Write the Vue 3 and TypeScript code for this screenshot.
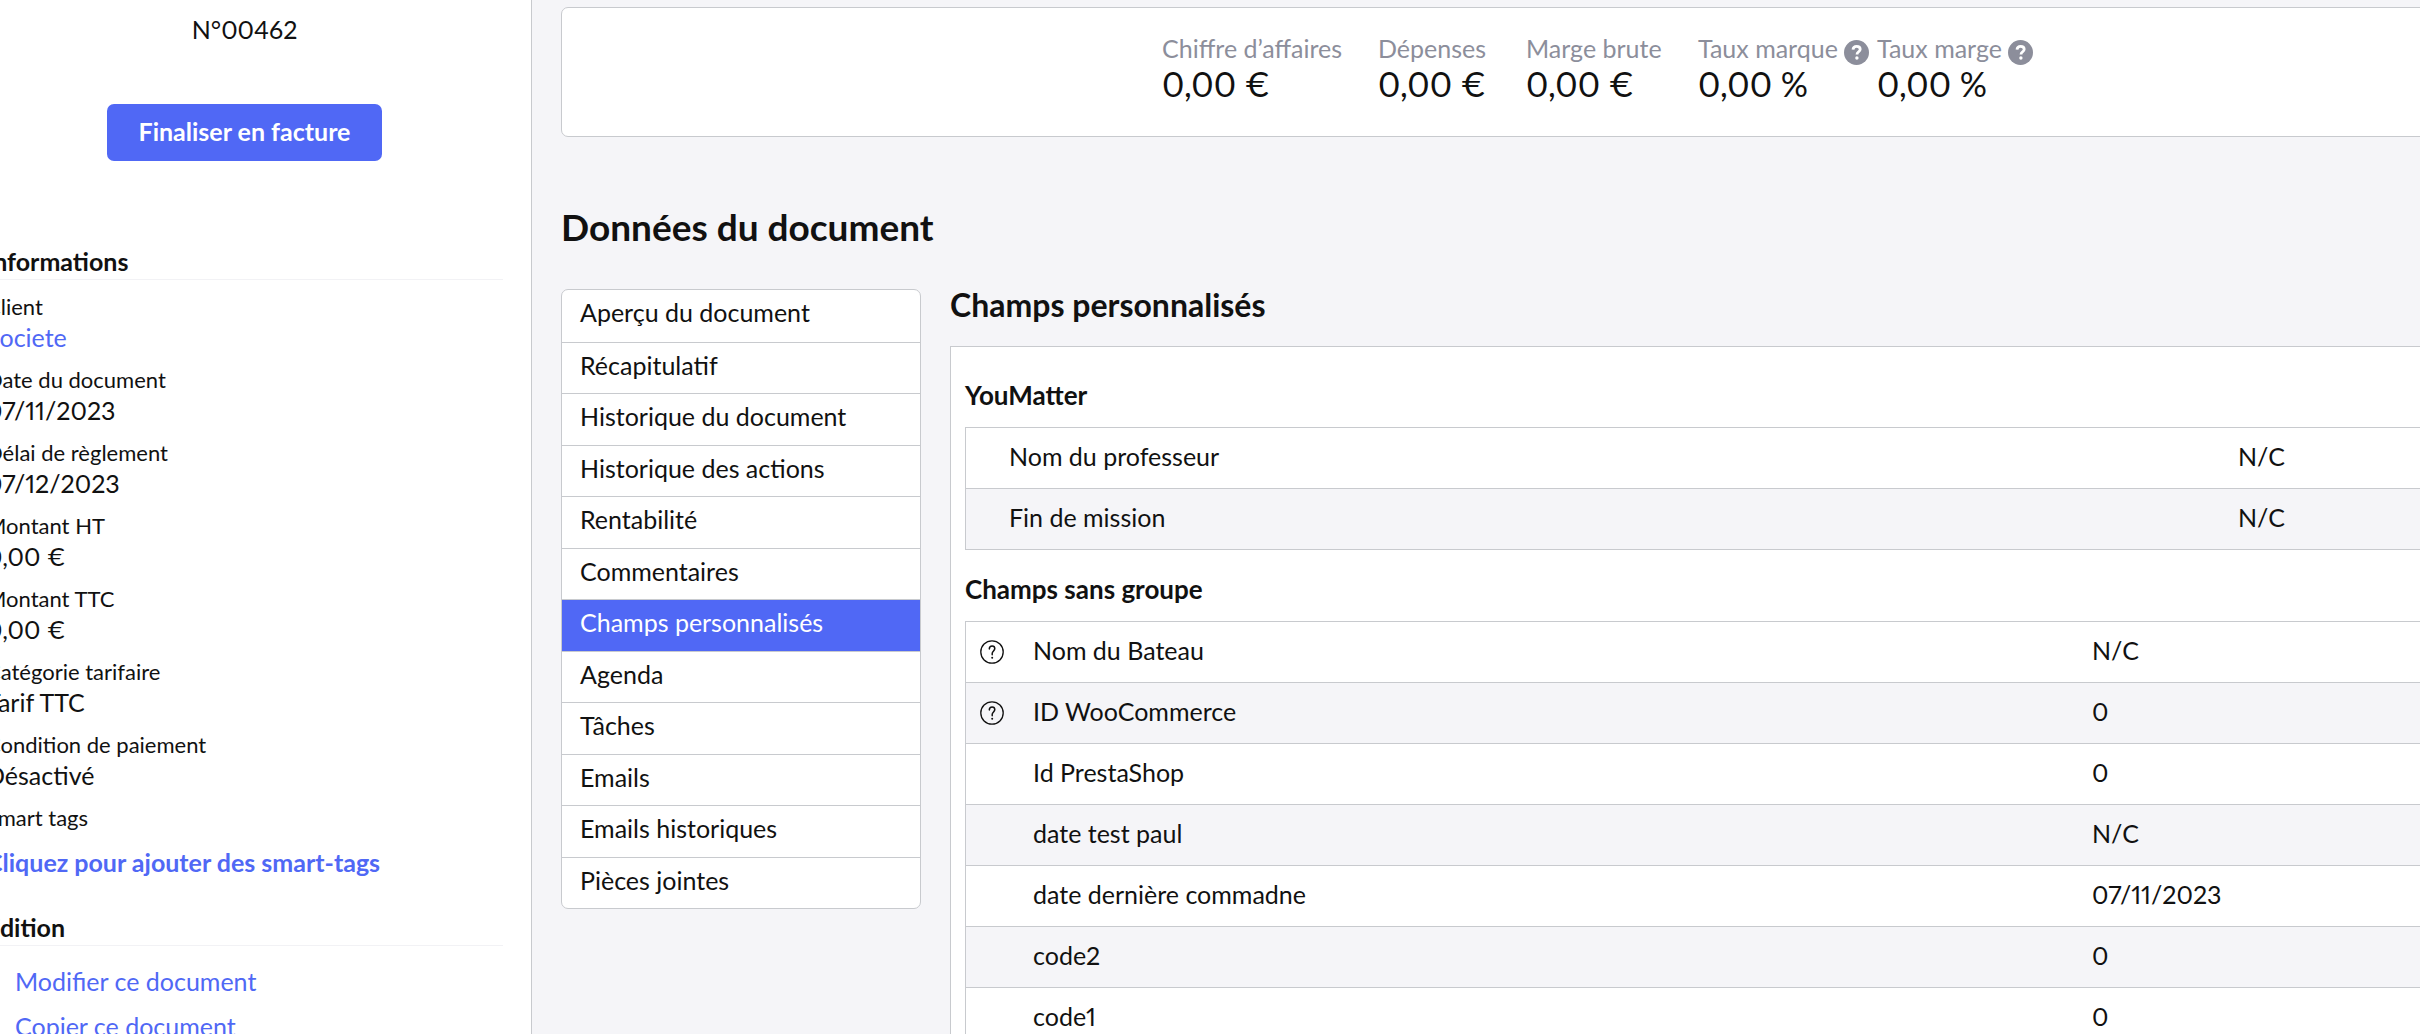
<script setup lang="ts">
interface Info { label: string; value: string; link?: boolean }
interface Stat { label: string; value: string; help?: boolean }
interface Field { name: string; value: string; help?: boolean }
interface Group { title: string; kind: string; fields: Field[] }

const infos: Info[] = [
  { label: 'Client', value: 'Societe', link: true },
  { label: 'Date du document', value: '07/11/2023' },
  { label: 'Délai de règlement', value: '07/12/2023' },
  { label: 'Montant HT', value: '0,00 €' },
  { label: 'Montant TTC', value: '0,00 €' },
  { label: 'Catégorie tarifaire', value: 'Tarif TTC' },
  { label: 'Condition de paiement', value: 'Désactivé' },
]

const stats: Stat[] = [
  { label: 'Chiffre d’affaires', value: '0,00 €' },
  { label: 'Dépenses', value: '0,00 €' },
  { label: 'Marge brute', value: '0,00 €' },
  { label: 'Taux marque', value: '0,00 %', help: true },
  { label: 'Taux marge', value: '0,00 %', help: true },
]

const tabs: string[] = [
  'Aperçu du document',
  'Récapitulatif',
  'Historique du document',
  'Historique des actions',
  'Rentabilité',
  'Commentaires',
  'Champs personnalisés',
  'Agenda',
  'Tâches',
  'Emails',
  'Emails historiques',
  'Pièces jointes',
]
const activeTab = 'Champs personnalisés'

const groups: Group[] = [
  {
    title: 'YouMatter',
    kind: 'grouped',
    fields: [
      { name: 'Nom du professeur', value: 'N/C' },
      { name: 'Fin de mission', value: 'N/C' },
    ],
  },
  {
    title: 'Champs sans groupe',
    kind: 'ungrouped',
    fields: [
      { name: 'Nom du Bateau', value: 'N/C', help: true },
      { name: 'ID WooCommerce', value: '0', help: true },
      { name: 'Id PrestaShop', value: '0' },
      { name: 'date test paul', value: 'N/C' },
      { name: 'date dernière commadne', value: '07/11/2023' },
      { name: 'code2', value: '0' },
      { name: 'code1', value: '0' },
    ],
  },
]
</script>

<template>
  <div class="app">
    <aside class="sidebar">
      <p class="number">N°00462</p>
      <button type="button" class="finalize">Finaliser en facture</button>

      <h2 class="side-title first">Informations</h2>
      <dl class="infos">
        <div v-for="info in infos" :key="info.label" class="info">
          <dt>{{ info.label }}</dt>
          <dd><a v-if="info.link" href="#">{{ info.value }}</a><template v-else>{{ info.value }}</template></dd>
        </div>
        <div class="info tags">
          <dt>Smart tags</dt>
          <dd><a href="#">Cliquez pour ajouter des smart-tags</a></dd>
        </div>
      </dl>

      <h2 class="side-title second">Edition</h2>
      <ul class="actions">
        <li><a href="#">Modifier ce document</a></li>
        <li><a href="#">Copier ce document</a></li>
      </ul>
    </aside>

    <main class="main">
      <section class="stats">
        <div v-for="stat in stats" :key="stat.label">
          <div class="stat-label">
            {{ stat.label }}
            <svg v-if="stat.help" class="help-solid" viewBox="0 0 25 25" aria-hidden="true">
              <circle cx="12.5" cy="12.5" r="12.5" fill="#8c8e9b" />
              <path d="M9 9.6C9.2 7.4 10.6 6.3 12.6 6.3c2.100 0 3.600 1.200 3.600 3 0 2.500-3.200 2.500-3.200 5.200" fill="none" stroke="#fff" stroke-width="2.800" />
              <circle cx="12.900" cy="18" r="1.700" fill="#fff" />
            </svg>
          </div>
          <div class="stat-value">{{ stat.value }}</div>
        </div>
      </section>

      <h1>Données du document</h1>

      <div class="columns">
        <nav class="tabs">
          <a v-for="tab in tabs" :key="tab" href="#" :class="{ active: tab === activeTab }">{{ tab }}</a>
        </nav>

        <section class="custom">
          <h2>Champs personnalisés</h2>
          <div class="panel">
            <template v-for="group in groups" :key="group.title">
              <h3>{{ group.title }}</h3>
              <table :class="group.kind">
                <tbody>
                  <tr v-for="field in group.fields" :key="field.name">
                    <td class="icon-cell">
                      <svg v-if="field.help" class="help" viewBox="0 0 24 24" aria-hidden="true">
                        <circle cx="12" cy="12" r="11.200" fill="none" stroke="#111" stroke-width="1.300" />
                        <path d="M9.300 8.900C9.400 7 10.500 6 12.100 6c1.600 0 2.700 1 2.700 2.600 0 2.200-2.600 2.600-2.600 5v1.200" fill="none" stroke="#111" stroke-width="1.500" stroke-linecap="round" />
                        <circle cx="12.200" cy="17.700" r="1" fill="#111" />
                      </svg>
                    </td>
                    <td>{{ field.name }}</td>
                    <td class="value-cell">{{ field.value }}</td>
                  </tr>
                </tbody>
              </table>
            </template>
          </div>
        </section>
      </div>
    </main>
  </div>
</template>

<style>
body {
  margin: 0;
  overflow: hidden;
}
</style>

<style scoped>
* {
  box-sizing: border-box;
}

.app {
  display: flex;
  height: 100vh;
  overflow: hidden;
  background: #f5f5f8;
  color: #111;
  font: 25px/28px Lato, "Open Sans", sans-serif;
  font-variant-numeric: proportional-nums;
}

h1, h2, h3, p, dl, dd, ul {
  margin: 0;
  padding: 0;
}

a {
  color: #5068f5;
  text-decoration: none;
}

/* The sidebar is scrolled slightly past its left edge */
.sidebar {
  display: flex;
  flex-direction: column;
  flex: none;
  width: 546px;
  margin-left: -14px;
  padding: 13px 28px 0 0;
  border-right: 1px solid #c8cace;
  background: #fff;
  line-height: 32px;
}

.sidebar > * {
  flex: none;
}

.number {
  text-align: center;
}

.finalize {
  align-self: center;
  width: 275px;
  height: 57px;
  margin-top: 59px;
  padding: 0 0 4px;
  border: 0;
  border-radius: 7px;
  background: #5068f5;
  color: #fff;
  font: bold 25px/32px Lato, "Open Sans", sans-serif;
}

.side-title {
  padding-bottom: 2px;
  border-bottom: 1px solid #f2f2f5;
  font-size: 25px;
  font-weight: bold;
}

.first {
  margin-top: 84px;
}

.second {
  margin-top: 33px;
}

.infos {
  display: flex;
  flex-direction: column;
  gap: 13px;
  margin-top: 13px;
}

.info dt {
  font-size: 22px;
  line-height: 28px;
}

.tags dd {
  margin-top: 14px;
  font-weight: bold;
}

.actions {
  display: flex;
  flex-direction: column;
  gap: 13px;
  margin-top: 19px;
  padding-left: 29px;
  list-style: none;
}

/* The document area is wider than the window and runs past its right edge */
.main {
  flex: 1;
  min-width: 0;
  margin-right: -220px;
  padding: 7px 0 0 29px;
}

.stats {
  display: grid;
  grid-template-columns: 216px 148px 172px 179px 162px;
  justify-content: center;
  padding: 26px 0 33px;
  border: 1px solid #c8cace;
  border-radius: 7px;
  background: #fff;
}

.stat-label {
  display: flex;
  gap: 6px;
  height: 31px;
  color: #8c8e9b;
  white-space: nowrap;
}

.help-solid {
  flex: none;
  align-self: flex-end;
  width: 25px;
  height: 25px;
}

.stat-value {
  font-size: 34px;
  line-height: 38px;
}

h1 {
  margin-top: 70px;
  font-size: 37px;
  line-height: 40px;
}

.columns {
  display: flex;
  align-items: flex-start;
  gap: 29px;
  margin-top: 42px;
}

.tabs {
  display: grid;
  grid-auto-rows: 1fr;
  flex: none;
  width: 360px;
  min-height: 620px;
  overflow: hidden;
  border: 1px solid #c8cace;
  border-radius: 7px;
  background: #fff;
}

.tabs a {
  padding: 8px 18px 0;
  color: #111;
}

.tabs a + a {
  border-top: 1px solid #c8cace;
}

.tabs a.active {
  background: #5068f5;
  color: #fff;
}

.custom {
  flex: 1;
  min-width: 0;
}

.custom h2 {
  font-size: 32px;
  line-height: 32px;
}

.panel {
  margin-top: 25px;
  padding: 32px 14px;
  border: 1px solid #c8cace;
  background: #fff;
}

h3 {
  margin-bottom: 16px;
  font-size: 26px;
  line-height: 32px;
}

table {
  width: 100%;
  border: 1px solid #c8cace;
  border-spacing: 0;
  table-layout: fixed;
}

table + h3 {
  margin-top: 23px;
}

td {
  padding: 14px 0 18px;
}

tr + tr td {
  border-top: 1px solid #c8cace;
}

tr:nth-child(even) {
  background: #f5f5f8;
}

.icon-cell {
  width: 43px;
  padding: 0 0 0 14px;
  vertical-align: middle;
}

.ungrouped .icon-cell {
  width: 67px;
}

.value-cell {
  width: 386px;
}

.ungrouped .value-cell {
  width: 532px;
}

.help {
  display: block;
  width: 24px;
  height: 24px;
}
</style>
